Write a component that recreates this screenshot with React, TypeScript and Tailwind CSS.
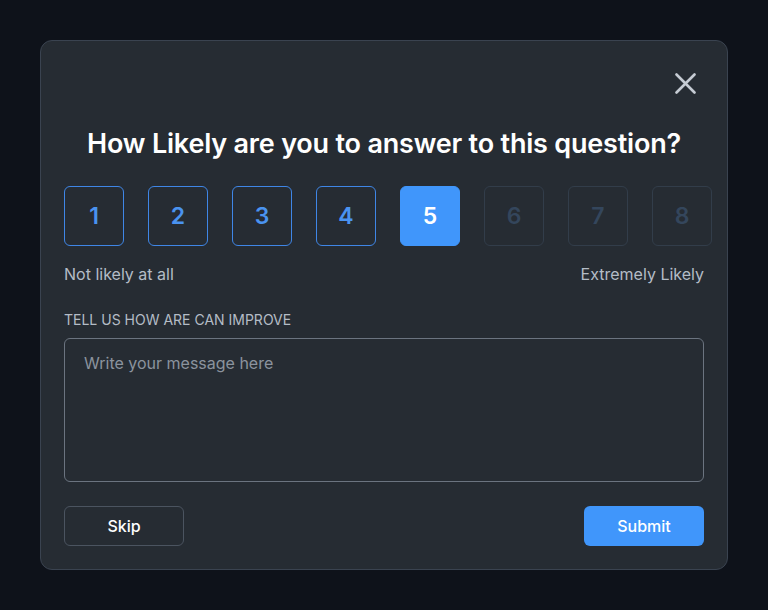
import React from "react";

export default function App() {
  const nums = [1, 2, 3, 4, 5, 6, 7, 8];
  return (
    <div className="w-[768px] h-[610px] bg-[#0e121a] pt-[40px] pl-[40px]" style={{ fontFamily: "Inter, 'Noto Sans', sans-serif" }}>
      <div className="w-[688px] h-[530px] rounded-[12px] border border-[#3a4350] bg-[#262c33] px-[23px] overflow-hidden flex flex-col">
        <div className="flex justify-end pt-[32px] pr-[8px]">
          <svg width="21" height="21" viewBox="0 0 21 21" className="text-[#c5cbd3]">
            <path d="M1.5 1.5 L19.5 19.5 M19.5 1.5 L1.5 19.5" stroke="currentColor" strokeWidth="2.6" strokeLinecap="round" fill="none" />
          </svg>
        </div>
        <h1 className="mt-[33px] text-center text-[27px] leading-[34px] font-semibold text-white tracking-[-0.2px]">
          How Likely are you to answer to this question?
        </h1>
        <div className="mt-[25px] flex gap-[24px]">
          {nums.map((n) => {
            const cls =
              n === 5
                ? "bg-[#4096fb] border-[#4096fb] text-white"
                : n < 5
                ? "border-[#3f86e6] text-[#4a93f0]"
                : "border-[#323d4a] text-[#34465c]";
            return (
              <div
                key={n}
                className={`shrink-0 w-[60px] h-[60px] rounded-[6px] border flex items-center justify-center text-[23px] font-semibold ${cls}`}
              >
                {n}
              </div>
            );
          })}
        </div>
        <div className="mt-[17px] flex justify-between text-[16px] leading-[22px] text-[#b4bcc6]">
          <span>Not likely at all</span>
          <span>Extremely Likely</span>
        </div>
        <div className="mt-[25px] text-[14px] leading-[20px] text-[#b4bcc6] uppercase">
          Tell us how are can improve
        </div>
        <textarea
          placeholder="Write your message here"
          className="mt-[8px] h-[144px] w-full resize-none rounded-[6px] border border-[#6b7480] bg-transparent px-[19px] py-[13px] text-[16px] leading-[22px] text-white placeholder:text-[#8b939e] outline-none"
        />
        <div className="mt-[24px] flex justify-between">
          <button className="w-[120px] h-[40px] rounded-[6px] border border-[#4b5460] text-white text-[16px] font-medium">
            Skip
          </button>
          <button className="w-[120px] h-[40px] rounded-[6px] bg-[#4096fb] text-white text-[16px] font-medium">
            Submit
          </button>
        </div>
      </div>
    </div>
  );
}
